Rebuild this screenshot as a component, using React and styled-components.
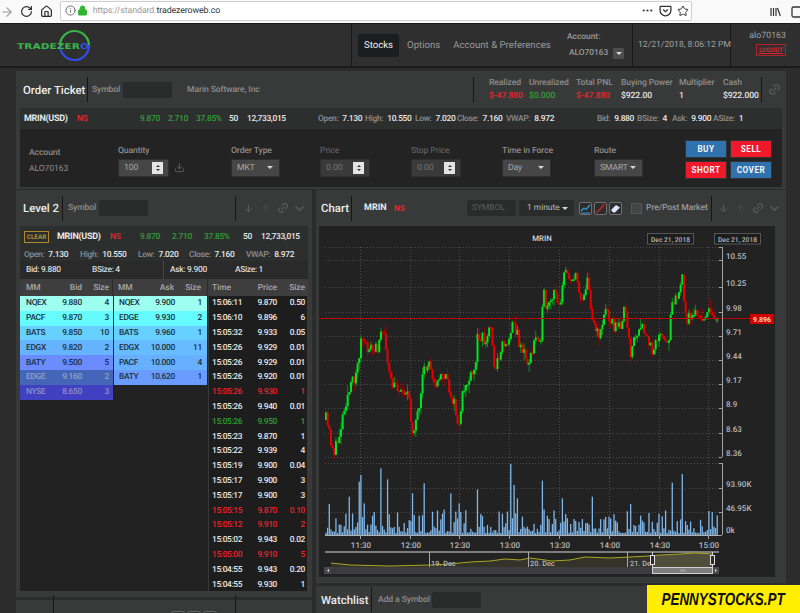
import React from "react";
import styled, { createGlobalStyle } from "styled-components";
import { ArrowRight, RotateCw, Home, Info, Lock, MoreHorizontal, Star, ArrowDown, ArrowUp, Link2, ChevronDown, Download } from "lucide-react";

const Global = createGlobalStyle`
  html, body { margin: 0; padding: 0; background: #2c2c2c; }
  * { box-sizing: border-box; }
  body { font-family: Roboto, "Liberation Sans", sans-serif; font-size: 8px; color: #e6e6e6; text-rendering: geometricPrecision; }
`;

const GREEN = "#2f9e35";
const RED = "#e8242c";
const MUTED = "#8c8c8c";

const Page = styled.div`
  position: relative;
  width: 800px;
  height: 613px;
  overflow: hidden;
  background: #2c2c2c;
  display: flex;
  flex-direction: column;
`;

/* ---- browser chrome ---- */
const Browser = styled.div`
  height: 24px;
  background: #f9f9fa;
  border-bottom: 1px solid #1a1a1a;
  display: flex;
  align-items: center;
  gap: 6px;
  color: #2a2a2a;
  flex: none;
`;
const ToolIcon = styled.span`
  width: 14px;
  display: flex;
  justify-content: center;
  color: ${(p) => p.$c || "#2a2a2a"};
`;
const UrlBox = styled.div`
  width: 640px;
  height: 20px;
  margin-top: -2px;
  background: #fff;
  border: 1px solid #cfcfd2;
  border-radius: 2px;
  display: flex;
  align-items: center;
  padding-left: 4px;
  gap: 1px;
  color: #9a9a9a;
`;
const UrlText = styled.span`
  margin-left: 4px;
  font-family: Roboto, sans-serif;
  font-size: 8.8px;
  letter-spacing: -0.1px;
  b { font-weight: 400; color: #333; }
`;
const UrlEnd = styled.div`
  margin-left: auto;
  display: flex;
  align-items: center;
  gap: 5px;
  padding-right: 2px;
  color: #333;
`;
const LibraryTools = styled.div`
  margin-left: 72px;
  display: flex;
  align-items: center;
  gap: 9px;
  color: #333;
`;

/* ---- app nav ---- */
const Nav = styled.div`
  height: 44px;
  flex: none;
  background: #2f2f2f;
  border-bottom: 2px solid #1b1b1b;
  display: flex;
`;
const NavSection = styled.div`
  width: ${(p) => p.$w}px;
  flex: none;
  border-right: ${(p) => (p.$line ? "1px solid #171717" : "none")};
  display: flex;
  align-items: center;
  padding-left: ${(p) => p.$pad || 0}px;
`;
const NavTab = styled.div`
  height: 23px;
  display: flex;
  align-items: center;
  padding: 0 6px;
  margin-right: ${(p) => p.$mr || 0}px;
  border-radius: 3px;
  font-size: 9.6px;
  white-space: nowrap;
  background: ${(p) => (p.$active ? "#1b1d1f" : "transparent")};
  color: ${(p) => (p.$active ? "#f0f0f0" : "#9a9a9a")};
`;
const AccountBox = styled.div`
  display: flex;
  flex-direction: column;
  gap: 6px;
  color: #9a9a9a;
  font-size: 8.4px;
  font-weight: 500;
  white-space: nowrap;
`;
const AccountRow = styled.div`
  display: flex;
  align-items: center;
  padding-left: 2px;
  gap: 5px;
`;
const MiniDrop = styled.span`
  width: 11px;
  height: 11px;
  background: #4d4d4d;
  border-radius: 1px;
  display: flex;
  align-items: center;
  justify-content: center;
`;
const Caret = styled.i`
  display: block;
  width: 0;
  height: 0;
  flex: none;
  border-left: 3px solid transparent;
  border-right: 3px solid transparent;
  border-top: 3.5px solid #d8d8d8;
`;
const DateText = styled.span`
  color: #a0a0a0;
  font-size: 8.6px;
  white-space: nowrap;
`;
const UserBox = styled.div`
  width: 100%;
  display: flex;
  flex-direction: column;
  align-items: flex-end;
  gap: 3px;
  padding-right: 14px;
  color: #a0a0a0;
  font-size: 8.8px;
  margin-top: -3px;
`;
const Logout = styled.span`
  border: 1px solid #b5202a;
  color: #d02a32;
  font-size: 6.3px;
  font-weight: 700;
  height: 12px;
  width: 30px;
  display: flex;
  align-items: center;
  justify-content: center;
  text-decoration: underline;
`;

/* ---- panels ---- */
const Main = styled.div`
  flex: 1;
  padding: 3px 14px 0 16px;
  display: flex;
  flex-direction: column;
  gap: 1px;
  min-height: 0;
`;
const Panel = styled.section`
  background: #383a3a;
  padding: ${(p) => p.$pad || "0 4px"};
  flex: none;
  height: ${(p) => (p.$h ? p.$h + "px" : "auto")};
`;
const Columns = styled.div`
  display: flex;
  gap: 4px;
  flex: 1;
  min-height: 0;
`;
const Column = styled.div`
  width: ${(p) => p.$w}px;
  flex: none;
  display: flex;
  flex-direction: column;
  gap: 3px;
`;
const Head = styled.div`
  height: ${(p) => p.$h || 36}px;
  display: flex;
  align-items: ${(p) => p.$align || "center"};
`;
const Title = styled.h2`
  margin: 0;
  font-size: 11.4px;
  font-weight: 500;
  color: #ececec;
  width: ${(p) => p.$w}px;
  padding-left: ${(p) => p.$pad ?? 3}px;
  flex: none;
  white-space: nowrap;
`;
const VLine = styled.span`
  width: 1px;
  height: 25px;
  flex: none;
  background: #161616;
  margin: ${(p) => p.$m || "0"};
`;
const Faint = styled.span`
  color: ${(p) => p.$c || MUTED};
  font-size: 8.6px;
  letter-spacing: -0.1px;
  font-weight: 500;
  white-space: nowrap;
  width: ${(p) => (p.$w ? p.$w + "px" : "auto")};
  flex: none;
  margin: ${(p) => p.$m || "0"};
`;
const DarkInput = styled.div`
  width: 49px;
  height: 16px;
  flex: none;
  background: #2a2c2c;
  border-radius: 2px;
  color: #5c5c5c;
  font-size: 8.4px;
  display: flex;
  align-items: center;
  padding-left: 5px;
`;
const Stat = styled.div`
  width: ${(p) => p.$w}px;
  flex: none;
  display: flex;
  flex-direction: column;
  gap: 3px;
  font-size: 8.6px;
  letter-spacing: -0.1px;
  color: ${MUTED};
  white-space: nowrap;
  font-weight: 500;
`;
const StatValue = styled.span`
  color: ${(p) => p.$c || "#e6e6e6"};
`;
const IconBtn = styled.span`
  width: ${(p) => p.$w || 17}px;
  flex: none;
  display: flex;
  justify-content: center;
  margin-left: ${(p) => p.$ml || 0}px;
  color: ${(p) => p.$c || "#5e6060"};
`;
const Ticker = styled.div`
  height: ${(p) => p.$h}px;
  background: ${(p) => p.$bg};
  display: flex;
  align-items: center;
  padding-left: ${(p) => p.$pad || 0}px;
  font-size: 8.4px;
  letter-spacing: -0.3px;
  white-space: nowrap;
`;
const Cell = styled.span`
  width: ${(p) => p.$w}px;
  flex: none;
  color: ${(p) => p.$c || "#e8e8e8"};
  font-weight: ${(p) => p.$fw || 500};
  font-size: ${(p) => (p.$fs ? p.$fs + "px" : "inherit")};
  margin-left: ${(p) => p.$ml || 0}px;
  display: flex;
  gap: ${(p) => p.$gap ?? 4}px;
`;
const Lab = styled.span`
  color: ${MUTED};
`;
const Clear = styled.span`
  width: 25px;
  height: 12px;
  border: 1px solid #b08a2c;
  color: #b8922e;
  font-size: 6.3px;
  letter-spacing: 0;
  font-weight: 700;
  display: flex;
  align-items: center;
  justify-content: center;
  margin-right: 8px;
  flex: none;
`;

/* ---- order form ---- */
const Form = styled.div`
  height: 58px;
  background: #232323;
  display: flex;
  align-items: center;
  padding: 6px 0 0 9px;
`;
const Field = styled.div`
  width: ${(p) => p.$w}px;
  flex: none;
  display: flex;
  flex-direction: column;
  gap: ${(p) => p.$gap || 3}px;
  font-size: 8.6px;
  letter-spacing: -0.1px;
  font-weight: 500;
  color: ${(p) => (p.$off ? "#5e5e5e" : MUTED)};
`;
const Plain = styled.span`
  font-weight: 400;
`;
const FieldRow = styled.div`
  display: flex;
  align-items: center;
  gap: 2px;
`;
const Control = styled.div`
  width: ${(p) => p.$w || 50}px;
  height: 18px;
  background: ${(p) => (p.$off ? "#3a3a3a" : "#464646")};
  border: 1px solid #2e2e2e;
  color: ${(p) => (p.$off ? "#737373" : "#a8a8a8")};
  font-size: 8.6px;
  font-weight: 400;
  display: flex;
  align-items: center;
  justify-content: space-between;
  padding: 0 6px 0 5px;
`;
const Spin = styled.span`
  width: 11px;
  height: 12px;
  margin-right: -1px;
  background: #e4e4e4;
  display: flex;
  flex-direction: column;
  align-items: center;
  justify-content: center;
  gap: 2px;
`;
const SpinUp = styled.i`
  display: block;
  width: 0;
  height: 0;
  border-left: 2px solid transparent;
  border-right: 2px solid transparent;
  border-bottom: 2.5px solid #333;
`;
const SpinDown = styled(SpinUp)`
  border-bottom: none;
  border-top: 2.5px solid #333;
`;
const Trade = styled.div`
  display: grid;
  grid-template-columns: 42px 42px;
  grid-auto-rows: 18px;
  gap: 3px;
  margin: -3px 0 0 1px;
`;
const TradeBtn = styled.button`
  border: 1px solid #333;
  padding: 0;
  font: 700 8.2px Roboto, sans-serif;
  letter-spacing: 0.5px;
  color: #f4f4f4;
  background: ${(p) => (p.$kind === "blue" ? "#2f72ad" : "#ee1a2c")};
`;

/* ---- level 2 ---- */
const QuoteBox = styled.div`
  display: flex;
  flex-direction: column;
`;
const SplitRow = styled.div`
  height: 18px;
  background: #2a2a2a;
  display: flex;
  align-items: center;
  font-size: 8.4px;
  letter-spacing: -0.3px;
`;
const SplitCell = styled.div`
  flex: none;
  width: ${(p) => p.$w}px;
  padding-left: ${(p) => p.$pad}px;
  height: 100%;
  display: flex;
  align-items: center;
  font-weight: 500;
  color: #dcdcdc;
  border-right: ${(p) => (p.$line ? "1px solid #444" : "none")};
`;
const BookHead = styled.div`
  display: flex;
  height: 17px;
  background: #3e3e3e;
`;
const BookBody = styled.div`
  display: flex;
  height: 296px;
  padding-bottom: 1px;
  background: #383a3a;
`;
const BookSide = styled.div`
  width: 188px;
  flex: none;
  background: #222;
  display: flex;
  align-items: flex-start;
`;
const Book = styled.div`
  width: ${(p) => p.$w}px;
  flex: none;
  border-left: ${(p) => (p.$line ? "1px solid #2a2a2a" : "none")};
`;
const BookRow = styled.div`
  display: grid;
  grid-template-columns: 30px 26px 27px;
  height: 14.8px;
  align-items: center;
  padding-left: ${(p) => (p.$line ? 5 : 6)}px;
  background: ${(p) => p.$bg || "transparent"};
  color: ${(p) => p.$c || "#1c3040"};
  font-size: 8.4px;
  letter-spacing: -0.3px;
  font-weight: 500;
  span:nth-child(n + 2) { text-align: right; }
`;
const TimeSales = styled.div`
  width: 98px;
  margin-left: 1px;
  flex: none;
  background: #1d1d1d;
`;
const TimeRow = styled.div`
  display: grid;
  grid-template-columns: 42px 23px 28px;
  height: 14.8px;
  align-items: center;
  padding-left: 3px;
  margin-left: ${(p) => p.$ml || 0}px;
  font-size: 8.4px;
  letter-spacing: -0.35px;
  font-weight: 500;
  color: ${(p) => p.$c || "#e8e8e8"};
  span:nth-child(n + 2) { text-align: right; white-space: nowrap; }
`;
const HeadCell = styled.div`
  width: ${(p) => p.$w}px;
  flex: none;
  border-right: ${(p) => (p.$line ? "1px solid #2b2b2b" : "none")};
`;
const HeadRow = styled(BookRow)`
  color: #a8a8a8;
  height: 17px;
  letter-spacing: 0;
`;
const HeadTime = styled(TimeRow)`
  color: #a8a8a8;
  height: 17px;
  letter-spacing: 0;
`;

/* ---- chart toolbar ---- */
const Select = styled.div`
  width: 55px;
  height: 16px;
  flex: none;
  margin-left: 3px;
  background: #2a2c2c;
  border-radius: 2px;
  font-size: 8.4px;
  color: #b8b8b8;
  display: flex;
  align-items: center;
  justify-content: space-between;
  padding: 0 6px 0 8px;
  white-space: nowrap;
`;
const ToolBtn = styled.span`
  width: 13px;
  height: 13px;
  flex: none;
  border: 1px solid #707070;
  border-radius: 2px;
  background: #2b2d2d;
  display: flex;
  align-items: center;
  justify-content: center;
  margin-left: ${(p) => p.$ml || 2}px;
`;
const Check = styled.span`
  width: 11px;
  height: 11px;
  flex: none;
  margin: 0 4px 0 9px;
  background: #454545;
  border: 1px solid #555;
`;
const ChartWrap = styled.div`
  width: 456px;
  height: 351px;
  background: #222;
`;
const Banner = styled.div`
  position: absolute;
  right: 0;
  bottom: 0;
  width: 153px;
  height: 28px;
  background: #ffee00;
  color: #111;
  font: italic 700 17.5px "Liberation Sans", sans-serif;
  display: flex;
  align-items: center;
  justify-content: center;
  span { display: block; white-space: nowrap; transform: scaleX(0.77); }
`;
const TinyBtn = styled.span`
  width: 14px;
  height: 12px;
  flex: none;
  margin: 0 0 -3px 2px;
  border: 1px solid #666;
  border-radius: 3px;
  background: #333;
`;
const Spacer = styled.div`
  width: ${(p) => p.$w || 0}px;
  height: ${(p) => p.$h || 0}px;
  flex: none;
`;

/* ---- data ---- */
const bids = [
  ["NQEX", "9.880", "4", "#9dfff0"],
  ["PACF", "9.870", "3", "#66fcff"],
  ["BATS", "9.850", "10", "#66d0ff"],
  ["EDGX", "9.820", "2", "#66b4ff"],
  ["BATY", "9.500", "5", "#6a8cff"],
  ["EDGE", "9.160", "2", "#4566b8", "#8ea2c8"],
  ["NYSE", "8.650", "3", "#4040c0", "#9090c8"],
];
const asks = [
  ["NQEX", "9.900", "1", "#9dfff0"],
  ["EDGE", "9.930", "2", "#66fcff"],
  ["BATS", "9.960", "1", "#66d0ff"],
  ["EDGX", "10.000", "11", "#66bcff"],
  ["PACF", "10.000", "4", "#66b0ff"],
  ["BATY", "10.620", "1", "#6a9cff"],
];
const TS_RED = "#f0202a";
const trades = [
  ["15:06:11", "9.870", "0.50"], ["15:06:10", "9.896", "6"], ["15:05:32", "9.933", "0.05"],
  ["15:05:26", "9.929", "0.01"], ["15:05:26", "9.929", "0.01"], ["15:05:26", "9.920", "0.01"],
  ["15:05:26", "9.930", "1", TS_RED], ["15:05:26", "9.940", "0.01"], ["15:05:26", "9.950", "1", GREEN],
  ["15:05:23", "9.870", "1"], ["15:05:22", "9.939", "4"], ["15:05:19", "9.900", "0.04"],
  ["15:05:17", "9.900", "3"], ["15:05:17", "9.900", "3"], ["15:05:15", "9.870", "0.10", TS_RED],
  ["15:05:12", "9.910", "2", TS_RED], ["15:05:02", "9.943", "0.02"], ["15:05:00", "9.910", "5", TS_RED],
  ["15:04:55", "9.943", "0.20"], ["15:04:55", "9.930", "1"],
];

const trace = [
  [326,420],[329,432],[332,445],[335,452],[338,440],[341,425],[345,402],[348,395],[351,388],[354,378],[358,365],[360,345],[362,338],[366,350],[369,345],[372,350],[375,352],[378,345],[381,325],[384,340],[386,345],[388,370],[391,385],[395,388],[398,385],[401,392],[405,388],[408,395],[412,430],[416,420],[420,412],[423,375],[426,368],[430,362],[434,378],[438,385],[442,372],[446,380],[449,390],[452,395],[455,410],[460,431],[462,400],[465,385],[468,382],[472,378],[475,370],[478,332],[482,335],[486,345],[490,323],[493,345],[495,375],[500,350],[505,340],[509,345],[512,313],[515,330],[520,343],[527,362],[532,357],[535,337],[542,333],[543,290],[547,313],[555,293],[560,303],[563,280],[567,270],[572,278],[577,280],[582,300],[587,280],[590,297],[593,320],[598,337],[607,307],[612,323],[618,330],[625,310],[630,353],[635,337],[643,330],[652,350],[657,335],[668,347],[672,297],[678,297],[682,277],[685,317],[692,318],[695,310],[702,322],[708,310],[715,318],
];
const interp = (x) => {
  for (let i = 1; i < trace.length; i++) {
    if (x <= trace[i][0]) {
      const [a, b] = trace[i - 1];
      const [c, d] = trace[i];
      return b + ((d - b) * (x - a)) / (c - a);
    }
  }
  return 318;
};
let seed = 11;
const rnd = () => {
  seed = (seed * 16807) % 2147483647;
  return seed / 2147483647;
};
const STEP = 1.665;
const candles = [];
{
  let prev = interp(326);
  for (let i = 0; i < 236; i++) {
    const x = 326 + i * STEP;
    const amp = x > 690 ? 6 : 15;
    const c = interp(x) + (rnd() - 0.5) * amp;
    const hi = Math.min(prev, c) - rnd() * rnd() * 10;
    const lo = Math.max(prev, c) + rnd() * rnd() * 10;
    candles.push({ x, o: prev, c, hi, lo });
    prev = c;
  }
}
const spikes = [[140,255],[197,235],[218,268],[293,310],[327,280],[407,310],[432,340],[487,298],[585,222],[596,285],[684,272],[742,325],[833,320],[948,342],[1072,278],[1101,252],[605,325],[135,275],[150,340],[45,342],[105,320]];
const volumes = candles.map((k) => {
  const r = rnd();
  return { x: k.x, h: 2 + r * r * 24 };
});
spikes.forEach(([zx, zy]) => {
  const x = 315 + zx / 3;
  const idx = Math.round((x - 326) / STEP);
  if (volumes[idx]) volumes[idx].h = (435 - zy) / 3;
});

const navLine = "331,563 350,565 390,566 430,565 450,564 470,562 490,561 505,559 520,560 530,558 545,560 552,561 570,560 585,557 610,558 630,557 648,556 660,555 680,554 695,553 712,554";

const priceTicks = [[260,"10.55"],[287,"10.25"],[312,"9.98"],[336,"9.71"],[360,"9.44"],[384,"9.17"],[408,"8.9"],[433,"8.63"],[457,"8.36"]];
const volTicks = [[463,""],[488,"93.90K"],[512,"46.95K"],[535,"0k"]];
const timeTicks = [[360,"11:30"],[410,"12:00"],[459,"12:30"],[509,"13:00"],[559,"13:30"],[609,"14:00"],[659,"14:30"],[708,"15:00"]];
const gridX = timeTicks.map((t) => t[0]);
const GRID = "#4c4c4c";
const labelFont = { fontFamily: "Roboto, sans-serif", fontSize: 8, fontWeight: 500, fill: "#b8b8b8" };

const ChartArt = () => (
  <svg width="456" height="351" viewBox="319 226 456 351" style={{ display: "block" }}>
    {[247, 260, 287, 312, 336, 360, 384, 408, 433, 457, 463, 488, 512].map((y) => (
      <line key={y} x1="325" x2="722" y1={y + 0.5} y2={y + 0.5} stroke={GRID} strokeDasharray="1 2" />
    ))}
    {gridX.map((x) => (
      <line key={x} x1={x + 0.5} x2={x + 0.5} y1="247" y2="535" stroke={GRID} strokeDasharray="1 2" />
    ))}
    {candles.map((k, i) => {
      const up = k.c < k.o;
      const col = up ? "#00e61e" : "#e60000";
      return (
        <g key={i}>
          <line x1={k.x} x2={k.x} y1={k.hi} y2={k.lo} stroke={up ? "#0a9a1a" : "#a00000"} strokeWidth="0.9" />
          <rect x={k.x - 1} y={Math.min(k.o, k.c)} width="2" height={Math.max(1.2, Math.abs(k.o - k.c))} fill={col} />
        </g>
      );
    })}
    <line x1="319" x2="751" y1="318.5" y2="318.5" stroke="#b80000" strokeWidth="1" />
    <rect x="750" y="314" width="24" height="10" fill="#d40000" />
    <text x="762" y="321.5" textAnchor="middle" style={{ ...labelFont, fontSize: 7, fill: "#f0d0d0", fontWeight: 700 }}>9.896</text>

    {volumes.map((v, i) => (
      <rect key={i} x={v.x - 0.7} y={535 - v.h} width="1.3" height={v.h} fill="#7fb6ea" />
    ))}
    <line x1="325" x2="722" y1="535.5" y2="535.5" stroke="#b0b0b0" />

    <line x1="722.5" x2="722.5" y1="247" y2="457" stroke="#a0a0a0" />
    <line x1="722.5" x2="722.5" y1="463" y2="535" stroke="#a0a0a0" />
    <line x1="719" x2="722" y1="247.5" y2="247.5" stroke="#a0a0a0" />
    {[...priceTicks, ...volTicks].map(([y, t]) => (
      <g key={y}>
        <line x1="719" x2="722" y1={y + 0.5} y2={y + 0.5} stroke="#a0a0a0" />
        {t && <text x="726" y={y - 1 + (y === 535 ? -1 : 0)} style={labelFont}>{t}</text>}
      </g>
    ))}
    {timeTicks.map(([x, t]) => (
      <g key={x}>
        <line x1={x + 0.5} x2={x + 0.5} y1="535" y2="539" stroke="#a0a0a0" />
        <text x={x + 1} y="548" textAnchor="middle" style={labelFont}>{t}</text>
      </g>
    ))}
    <text x="542" y="240.5" textAnchor="middle" style={{ ...labelFont, fill: "#d8d8d8", fontSize: 7.8 }}>MRIN</text>
    {[647, 714].map((x) => (
      <g key={x}>
        <rect x={x + 0.5} y="233.5" width="46" height="10.5" fill="#1d1d1d" stroke="#555" />
        <text x={x + 23.5} y="241.5" textAnchor="middle" style={{ ...labelFont, fontSize: 6.7 }}>Dec 21, 2018</text>
      </g>
    ))}

    {/* navigator */}
    <rect x="325" y="551" width="394" height="2" fill="#7c7c7c" />
    <polygon points={`331,567 ${navLine} 712,567`} fill="#33332a" />
    <polygon points="652,567 652,555 660,555 680,554 695,553 712,554 712,567" fill="#4e4e3a" />
    <polyline points={navLine} fill="none" stroke="#aaa522" strokeWidth="1" />
    {[429, 528, 627].map((x) => (
      <line key={x} x1={x + 0.5} x2={x + 0.5} y1="552" y2="567" stroke="#a8a8a8" />
    ))}
    <text x="431" y="565.5" style={{ ...labelFont, fontSize: 7.3 }}>19. Dec</text>
    <text x="530" y="565.5" style={{ ...labelFont, fontSize: 7.3 }}>20. Dec</text>
    <text x="630" y="565.5" style={{ ...labelFont, fontSize: 7.3 }}>21. De</text>
    <rect x="324" y="567" width="395" height="7" fill="#3c3c3e" />
    <rect x="324" y="567" width="7" height="7" fill="#4a4a4c" />
    <rect x="713" y="567" width="6" height="7" fill="#4a4a4c" />
    <path d="M329 569v3l-2-1.5zM715 569v3l2-1.5z" fill="#ddd" />
    <rect x="652.5" y="567.5" width="60" height="6" fill="#7e7e7e" stroke="#d0d0d0" />
    <path d="M681 569.5v2M683 569.5v2M685 569.5v2" stroke="#ddd" strokeWidth="0.7" />
    <line x1="652.5" x2="652.5" y1="552" y2="567" stroke="#d0d0d0" />
    <line x1="712.5" x2="712.5" y1="552" y2="567" stroke="#d0d0d0" />
    {[650, 710].map((x) => (
      <rect key={x} x={x + 0.5} y="555.5" width="4" height="9" fill="#2a2a2a" stroke="#e0e0e0" />
    ))}
  </svg>
);

const Logo = () => (
  <svg width="80" height="36" viewBox="0 0 80 36" style={{ marginLeft: 16 }}>
    <path d="M44 18.5A14.5 14.5 0 0 1 73 18.5" fill="none" stroke="#3ab54a" strokeWidth="2.2" />
    <path d="M44 18.5A14.5 14.5 0 0 0 73 18.5" fill="none" stroke="#2f4fe8" strokeWidth="2.2" />
    <text x="1" y="21.5" textLength="72" lengthAdjust="spacingAndGlyphs" style={{ fontFamily: "DejaVu Sans, sans-serif", fontWeight: 700, fontSize: 8, fill: "#3ab54a" }}>
      TRADEZER<tspan fill="#2f4fe8">O</tspan>
    </text>
  </svg>
);

const PocketIcon = () => (
  <svg width="13" height="13" viewBox="0 0 14 14" fill="none" stroke="#333" strokeWidth="1.4">
    <path d="M2 2.5h10a.8.8 0 0 1 .8.8V7a5.8 5.8 0 0 1-11.6 0V3.3a.8.8 0 0 1 .8-.8z" />
    <path d="M4.5 6l2.5 2.2L9.5 6" />
  </svg>
);
const LibIcon = () => (
  <svg width="11" height="10" viewBox="0 0 11 10" fill="none" stroke="#333" strokeWidth="1.2">
    <path d="M1 1v8M3.5 1v8M6 1v8M7.5 1l2.8 8" />
  </svg>
);
const SpinBox = () => (
  <Spin>
    <SpinUp />
    <SpinDown />
  </Spin>
);
const PanelIcons = ({ first }) => (
  <>
    <IconBtn $ml={first}><ArrowDown size={11} /></IconBtn>
    <IconBtn $c="#4c4e4e"><ArrowUp size={11} /></IconBtn>
    <IconBtn><Link2 size={12} style={{ transform: "rotate(-45deg)" }} /></IconBtn>
    <IconBtn><ChevronDown size={15} /></IconBtn>
  </>
);

export default function App() {
  return (
    <Page>
      <Global />
      <Browser>
        <ToolIcon $c="#9a9a9a"><ArrowRight size={14} /></ToolIcon>
        <ToolIcon><RotateCw size={13} strokeWidth={2.2} /></ToolIcon>
        <ToolIcon><Home size={13} strokeWidth={2.2} /></ToolIcon>
        <UrlBox>
          <Info size={11} color="#666" />
          <Lock size={11} color="#2fb52f" fill="#2fb52f" />
          <UrlText>https://standard.<b>tradezeroweb.co</b></UrlText>
          <UrlEnd>
            <MoreHorizontal size={13} />
            <PocketIcon />
            <Star size={12} strokeWidth={2} />
          </UrlEnd>
        </UrlBox>
        <LibraryTools>
          <LibIcon />
          <svg width="10" height="12" viewBox="0 0 10 12" fill="none" stroke="#333" strokeWidth="1.3"><rect x="2" y="1" width="10" height="10" rx="1.5" /></svg>
        </LibraryTools>
      </Browser>

      <Nav>
        <NavSection $w={352} $line><Logo /></NavSection>
        <NavSection $w={205} $pad={6}>
          <NavTab $active $mr={2}>Stocks</NavTab>
          <NavTab $mr={1}>Options</NavTab>
          <NavTab>Account &amp; Preferences</NavTab>
        </NavSection>
        <NavSection $w={76} $pad={10} $line>
          <AccountBox>
            <span>Account:</span>
            <AccountRow>ALO70163 <MiniDrop><Caret /></MiniDrop></AccountRow>
          </AccountBox>
        </NavSection>
        <NavSection $w={98} $pad={5} $line><DateText>12/21/2018, 8:06:12 PM</DateText></NavSection>
        <NavSection $w={69}>
          <UserBox>
            <span>alo70163</span>
            <Logout>LOGOUT</Logout>
          </UserBox>
        </NavSection>
      </Nav>

      <Main>
        <Panel>
          <Head $h={37}>
            <Title $w={67}>Order Ticket</Title>
            <VLine />
            <Faint $m="0 4px 0 4px" $w={27}>Symbol</Faint>
            <DarkInput />
            <Faint $m="0 0 0 15px" $w={286}>Marin Software, Inc</Faint>
            <VLine $m="0 15px 0 0" />
            <Stat $w={40}>Realized<StatValue $c={RED}>$-47.880</StatValue></Stat>
            <Stat $w={47}>Unrealized<StatValue $c={GREEN}>$0.000</StatValue></Stat>
            <Stat $w={45}>Total PNL<StatValue $c={RED}>$-47.880</StatValue></Stat>
            <Stat $w={58}>Buying Power<StatValue>$922.00</StatValue></Stat>
            <Stat $w={44}>Multiplier<StatValue>1</StatValue></Stat>
            <Stat $w={38}>Cash<StatValue>$922.000</StatValue></Stat>
            <VLine />
            <IconBtn $w={24}><Link2 size={13} style={{ transform: "rotate(-45deg)" }} /></IconBtn>
          </Head>
          <Ticker $h={21} $bg="#2d2f2f" $pad={4}>
            <Cell $w={53} $fw={700} $fs={9}>MRIN(USD)</Cell>
            <Cell $w={63} $c={RED}>NS</Cell>
            <Cell $w={28} $c={GREEN}>9.870</Cell>
            <Cell $w={28} $c={GREEN}>2.710</Cell>
            <Cell $w={33} $c={GREEN}>37.85%</Cell>
            <Cell $w={18}>50</Cell>
            <Cell $w={71}>12,733,015</Cell>
            <Cell $w={47}><Lab>Open:</Lab>7.130</Cell>
            <Cell $w={50}><Lab>High:</Lab>10.550</Cell>
            <Cell $w={42}><Lab>Low:</Lab>7.020</Cell>
            <Cell $w={49}><Lab>Close:</Lab>7.160</Cell>
            <Cell $w={91}><Lab>VWAP:</Lab>8.972</Cell>
            <Cell $w={40}><Lab>Bid:</Lab>9.880</Cell>
            <Cell $w={35}><Lab>BSize:</Lab>4</Cell>
            <Cell $w={41}><Lab>Ask:</Lab>9.900</Cell>
            <Cell $w={40}><Lab>ASize:</Lab>1</Cell>
          </Ticker>
          <Form>
            <Field $w={89} $gap={6}>Account<Plain>ALO70163</Plain></Field>
            <Field $w={113}>
              Quantity
              <FieldRow><Control $w={51}>100<SpinBox /></Control><IconBtn $w={16}><Download size={11} /></IconBtn></FieldRow>
            </Field>
            <Field $w={89}>Order Type<Control $w={49}>MKT<Caret /></Control></Field>
            <Field $w={91} $off>Price<Control $w={50} $off>0.00<SpinBox /></Control></Field>
            <Field $w={91} $off>Stop Price<Control $w={50} $off>0.00<SpinBox /></Control></Field>
            <Field $w={92}>Time in Force<Control $w={49}>Day<Caret /></Control></Field>
            <Field $w={90}>Route<Control $w={49}>SMART<Caret /></Control></Field>
            <Trade>
              <TradeBtn $kind="blue">BUY</TradeBtn>
              <TradeBtn>SELL</TradeBtn>
              <TradeBtn>SHORT</TradeBtn>
              <TradeBtn $kind="blue">COVER</TradeBtn>
            </Trade>
          </Form>
          <Spacer $h={2} />
        </Panel>

        <Columns>
          <Column $w={296}>
            <Panel $h={407}>
              <Head>
                <Title $w={42}>Level 2</Title>
                <VLine />
                <Faint $m="0 4px 0 5px" $w={27}>Symbol</Faint>
                <DarkInput />
                <VLine $m="0 0 0 87px" />
                <PanelIcons first={4} />
              </Head>
              <QuoteBox>
                <Ticker $h={22} $bg="#2d2f2f" $pad={4}>
                  <Clear>CLEAR</Clear>
                  <Cell $w={53} $fw={700} $fs={9}>MRIN(USD)</Cell>
                  <Cell $w={30} $c={RED}>NS</Cell>
                  <Cell $w={32} $c={GREEN}>9.870</Cell>
                  <Cell $w={32} $c={GREEN}>2.710</Cell>
                  <Cell $w={39} $c={GREEN}>37.85%</Cell>
                  <Cell $w={18}>50</Cell>
                  <Cell $w={46}>12,733,015</Cell>
                </Ticker>
                <Ticker $h={13} $bg="#2d2f2f" $pad={4}>
                  <Cell $w={56}><Lab>Open:</Lab>7.130</Cell>
                  <Cell $w={58}><Lab>High:</Lab>10.550</Cell>
                  <Cell $w={51}><Lab>Low:</Lab>7.020</Cell>
                  <Cell $w={57}><Lab>Close:</Lab>7.160</Cell>
                  <Cell $w={50}><Lab>VWAP:</Lab>8.972</Cell>
                </Ticker>
                <SplitRow>
                  <SplitCell $w={72} $pad={6}>Bid:&nbsp;9.880</SplitCell>
                  <SplitCell $w={72} $pad={0} $line>BSize:&nbsp;4</SplitCell>
                  <SplitCell $w={71} $pad={6}>Ask:&nbsp;9.900</SplitCell>
                  <SplitCell $w={60} $pad={0}>ASize:&nbsp;1</SplitCell>
                </SplitRow>
                <BookHead>
                  <HeadCell $w={93} $line><HeadRow><span>MM</span><span>Bid</span><span>Size</span></HeadRow></HeadCell>
                  <HeadCell $w={95} $line><HeadRow $line><span>MM</span><span>Ask</span><span>Size</span></HeadRow></HeadCell>
                  <HeadCell $w={100}><HeadTime $ml={1}><span>Time</span><span>Price</span><span>Size</span></HeadTime></HeadCell>
                </BookHead>
                <BookBody>
                  <BookSide>
                    <Book $w={93}>
                      {bids.map((r) => (
                        <BookRow key={r[0]} $bg={r[3]} $c={r[4]}><span>{r[0]}</span><span>{r[1]}</span><span>{r[2]}</span></BookRow>
                      ))}
                    </Book>
                    <Book $w={94} $line>
                      {asks.map((r) => (
                        <BookRow key={r[0]} $bg={r[3]} $line><span>{r[0]}</span><span>{r[1]}</span><span>{r[2]}</span></BookRow>
                      ))}
                    </Book>
                  </BookSide>
                  <TimeSales>
                    {trades.map((r, i) => (
                      <TimeRow key={i} $c={r[3]}><span>{r[0]}</span><span>{r[1]}</span><span>{r[2]}</span></TimeRow>
                    ))}
                  </TimeSales>
                </BookBody>
              </QuoteBox>
            </Panel>
            <Panel $h={20}>
              <Head $h={20} $align="flex-end">
                <VLine $m="0 0 0 33px" />
                <Spacer $w={115} />
                <TinyBtn /><TinyBtn /><TinyBtn />
                <VLine $m="0 0 0 18px" />
              </Head>
            </Panel>
          </Column>

          <Column $w={470}>
            <Panel $pad="0 11px 6px 3px" $h={393}>
              <Head>
                <Title $w={32} $pad={2}>Chart</Title>
                <VLine />
                <Cell $w={30} $fw={700} $fs={9} $ml={12}>MRIN</Cell>
                <Cell $w={73} $c={RED} $fw={700}>NS</Cell>
                <DarkInput>SYMBOL</DarkInput>
                <Select>1 minute<Caret /></Select>
                <ToolBtn $ml={5}>
                  <svg width="11" height="11" viewBox="0 0 11 11" fill="none" stroke="#2f9be0" strokeWidth="1.2"><path d="M1 8l3-3 2 1.5L10 2M1 10h9" /></svg>
                </ToolBtn>
                <ToolBtn>
                  <svg width="11" height="11" viewBox="0 0 11 11" fill="none" stroke="#e0202a" strokeWidth="1.2"><path d="M1.5 10L9.5 1" /></svg>
                </ToolBtn>
                <ToolBtn>
                  <svg width="11" height="11" viewBox="0 0 11 11"><path d="M1 7l5-5 4 2.5-5 5H3z" fill="#d8e6ff" /></svg>
                </ToolBtn>
                <Check />
                <Faint $w={65} $c="#9a9a9a">Pre/Post Market</Faint>
                <VLine />
                <PanelIcons first={3} />
              </Head>
              <ChartWrap><ChartArt /></ChartWrap>
            </Panel>
            <Panel $pad="0 0 0 3px">
              <Head $h={27}>
                <Title $w={52} $pad={2}>Watchlist</Title>
                <VLine />
                <Faint $m="0 4px 0 6px" $w={50}>Add a Symbol</Faint>
                <DarkInput />
              </Head>
            </Panel>
          </Column>
        </Columns>
      </Main>
      <Banner><span>PENNYSTOCKS.PT</span></Banner>
    </Page>
  );
}
